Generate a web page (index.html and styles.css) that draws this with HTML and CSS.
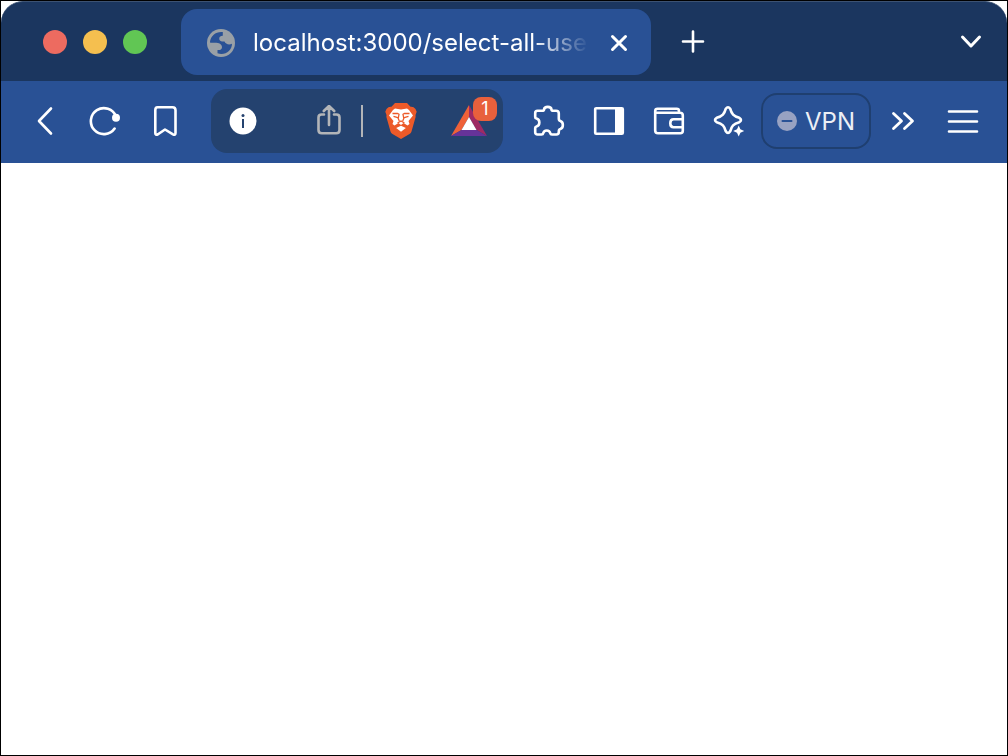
FILE: index.html
```html
<!DOCTYPE html>
<html lang="en">
<head>
<meta charset="utf-8">
<title>localhost:3000/select-all-use</title>
<link rel="stylesheet" href="styles.css">
</head>
<body>
<div class="window">
  <header class="titlebar">
    <div class="lights">
      <button class="light light-close" aria-label="Close window"></button>
      <button class="light light-minimize" aria-label="Minimize window"></button>
      <button class="light light-zoom" aria-label="Zoom window"></button>
    </div>
    <div class="tab">
      <svg class="favicon" viewBox="0 0 28 28" aria-hidden="true">
        <circle cx="14" cy="14" r="14" fill="#99a0a6"/>
        <path d="M15.800 3C9 2.200 3.900 6.600 3 12.500L3.200 13.700H8C12 13.700 15 15 15 18.200C15 20.500 13 21.200 10.500 21V24.300C18 27 25 21.500 25 14.700C22 16.400 18.500 15 17.500 12.600C16 12.600 12.800 12.700 12.300 10.300C11.800 7.800 13.300 7 15.800 6.700Z" fill="#295195"/>
      </svg>
      <span class="tab-title">localhost:3000/select-all-use</span>
      <button class="tab-close" aria-label="Close tab">
        <svg class="icon" viewBox="0 0 32 32"><path d="M9.500 9.500L22.500 22.500M22.500 9.500L9.500 22.500" stroke-width="3"/></svg>
      </button>
    </div>
    <button class="tool" aria-label="New tab">
      <svg class="icon" viewBox="0 0 32 32"><path d="M6 15.500H26M16 5.500V25.500" stroke-width="2.600"/></svg>
    </button>
    <button class="tool tab-search" aria-label="Search tabs">
      <svg class="icon" viewBox="0 0 32 32"><path d="M7.500 11L16 20L24.500 11" stroke-width="3"/></svg>
    </button>
  </header>

  <nav class="toolbar" aria-label="Browser toolbar">
    <button class="tool" aria-label="Back">
      <svg class="icon" viewBox="0 0 32 32"><path d="M22 3.500L10 16L22 28.500"/></svg>
    </button>
    <button class="tool" aria-label="Reload">
      <svg class="icon" viewBox="0 0 32 32"><path d="M27 11.500A13 13 0 1 0 25.600 23.500"/><circle cx="27" cy="12.700" r="4" fill="#fff" stroke="none"/></svg>
    </button>
    <button class="tool" aria-label="Bookmark this page">
      <svg class="icon" viewBox="0 0 32 32"><path d="M8.500 2.200H23.500Q26.500 2.200 26.500 5.200V28Q26.500 30.500 24 29.300L16 24.500L9 29.300Q6.300 30.500 6.300 28V5.200Q6.300 2.200 8.500 2.200Z"/></svg>
    </button>

    <div class="address">
      <button class="site-info" aria-label="Site information">
        <svg class="icon" viewBox="0 0 32 32"><circle cx="16" cy="16" r="13.500" fill="#fff" stroke="none"/><circle cx="16" cy="10.500" r="1.500" fill="#24426f" stroke="none"/><path d="M16 14V23" stroke="#24426f" stroke-width="2" stroke-linecap="butt"/></svg>
      </button>
      <input class="address-input" type="text" aria-label="Address">
      <button class="share" aria-label="Share">
        <svg class="icon share-icon" viewBox="0 0 32 32"><path d="M11 9.500H8.500Q5.500 9.500 5.500 12.500V25Q5.500 28.300 8.800 28.300H23.200Q26.500 28.300 26.500 25V12.500Q26.500 9.500 23.500 9.500H21M16 20V1.500M10.800 6L16 1L21.200 6"/></svg>
      </button>
      <span class="divider"></span>
      <button class="shields" aria-label="Brave Shields">
        <svg class="lion" viewBox="0 0 32 36">
          <path d="M10 0H22L25.500 3.700Q28.500 3.300 30.500 6L31.700 8.700L30.500 12L30.600 14L26.500 28.500Q26 30 24.500 31L16 36L7.500 31Q6 30 5.500 28.500L1.400 14L1.500 12L.3 8.700L1.500 6Q3.500 3.300 6.500 3.700Z" fill="#ec5a29"/>
          <path d="M10 5.500L16 6.500L22 5.500L24 7L28 12.500L23.500 18L24.500 21L22.500 22.500L18.500 20L16 22L13.500 20L9.500 22.500L7.500 21L8.500 18L4 12.500L8 7Z" fill="#fff"/>
          <path d="M16 22.800L20.800 25L16 28.700L11.200 25Z" fill="#fff"/>
          <path d="M7.500 10.500L12.500 10.300L14 11.300L13.200 15.500L14.300 18M24.500 10.500L19.500 10.300L18 11.300L18.800 15.500L17.700 18M8.500 13.300L12.800 14.600M23.500 13.300L19.200 14.600M12.500 20L16 18L19.500 20" fill="none" stroke="#ec5a29" stroke-width="1.300"/>
        </svg>
      </button>
      <button class="rewards" aria-label="Brave Rewards, 1 notification">
        <svg class="triangle" viewBox="0 0 36 32">
          <path d="M18 0L0 31L10.500 25L18 12Z" fill="#ee6138"/>
          <path d="M18 0L36 31L25.500 25L18 12Z" fill="#9e2a63"/>
          <path d="M0 31H36L25.500 25H10.500Z" fill="#663399"/>
          <path d="M18 12L25.500 25H10.500Z" fill="#fff"/>
        </svg>
        <span class="badge">1</span>
      </button>
    </div>

    <button class="tool" aria-label="Extensions">
      <svg class="icon" viewBox="0 0 32 32"><path d="M4.500 5.800H9Q11 5.800 11 4.500C11.500 1 18 1 18.500 4.500Q18.500 5.800 20.500 5.800H23Q25.800 5.800 25.800 8.500V13.500Q25.800 15.700 27.300 16C30.700 17 30.700 23 27.300 24Q25.800 24.300 25.800 26.500V27Q25.800 29.500 23.300 29.500H19Q17.500 29.500 17.300 28.300C16.500 24.500 11 24.500 10.200 28.300Q10 29.500 8.500 29.500H4.500Q2.200 29.500 2.200 27.200V23Q2.200 21.700 3.500 21.400C7.300 20.500 7.300 14.500 3.500 13.600Q2.200 13.300 2.200 12V8.200Q2.200 5.800 4.500 5.800Z"/></svg>
    </button>
    <button class="tool" aria-label="Sidebar">
      <svg class="icon" viewBox="0 0 32 32"><rect x="2.200" y="3.200" width="27.600" height="25.600" rx="1"/><path d="M22 3H30V29H22Z" fill="#fff" stroke="none"/></svg>
    </button>
    <button class="tool" aria-label="Wallet">
      <svg class="icon" viewBox="0 0 32 32"><path d="M26 7.500V6Q26 3.700 23.700 3.700H4.500Q2.200 3.700 2.200 6V25.500Q2.200 28.300 5 28.300H27.300Q29.800 28.300 29.800 25.800V10.500Q29.800 7.800 27 7.800H3M29.500 14.300H20.500Q17.300 14.300 17.300 18.200Q17.300 22.200 20.500 22.200H29.500"/></svg>
    </button>
    <button class="tool" aria-label="Leo AI">
      <svg class="icon" viewBox="0 0 32 32"><path d="M12.800 3.700Q15 .7 17.200 3.700C18.600 9 20.500 11.300 26.300 12.800Q29.700 15 26.300 17.200C20.500 18.700 18.600 21 17.200 26.300Q15 29.700 12.800 26.300C11.400 21 9.500 18.700 3.700 17.200Q.3 15 3.700 12.800C9.500 11.300 11.400 9 12.800 3.700Z"/><path d="M25.700 20.500L27.400 24.300L31.200 26L27.400 27.700L25.700 31.500L24 27.700L20.200 26L24 24.300Z" fill="#fff" stroke="none"/></svg>
    </button>
    <button class="vpn">
      <svg class="vpn-dot" viewBox="0 0 20 20" aria-hidden="true"><circle cx="10" cy="10" r="10" fill="#98a2c2"/><path d="M5.500 10H14.500" stroke="#295195" stroke-width="2" stroke-linecap="round"/></svg>
      VPN
    </button>
    <button class="tool" aria-label="More extensions">
      <svg class="icon" viewBox="0 0 32 32"><path d="M6.500 8.500L14.500 16L6.500 23.500M17.500 8.500L25.500 16L17.500 23.500" stroke-width="2.800"/></svg>
    </button>
    <button class="tool" aria-label="Menu">
      <svg class="icon" viewBox="0 0 32 32"><path d="M2 6.500H30M2 16.500H30M2 26.500H30" stroke-width="2.600"/></svg>
    </button>
  </nav>

  <main class="page"></main>
</div>
</body>
</html>
```

FILE: styles.css
```css
* {
  box-sizing: border-box;
}

body {
  margin: 0;
  background: #fff;
  font-family: Inter, "Liberation Sans", sans-serif;
}

button {
  padding: 0;
  border: 0;
  background: none;
  color: inherit;
  font: inherit;
}

svg {
  display: block;
  flex: none;
}

.window {
  display: flex;
  flex-direction: column;
  min-height: 100vh;
  border: 1px solid #000;
  color: #fff;
}

.titlebar {
  display: flex;
  align-items: center;
  height: 80px;
  padding: 0 6px 0 42px;
  border-top: 1px solid #3c5272;
  border-radius: 22px 22px 0 0;
  background: #1b365f;
}

.lights {
  display: flex;
  gap: 16px;
  margin-right: 34px;
}

.light {
  width: 24px;
  height: 24px;
  border-radius: 50%;
}

.light-close {
  background: #ed6b60;
}

.light-minimize {
  background: #f5bf4f;
}

.light-zoom {
  background: #61c654;
}

.tab {
  display: flex;
  flex: 0 1 470px;
  align-items: center;
  min-width: 0;
  height: 66px;
  padding: 2px 16px 0 26px;
  border-radius: 16px;
  background: #295195;
}

.favicon {
  width: 28px;
  height: 28px;
}

.tab-title {
  flex: 1;
  min-width: 0;
  margin: 0 14px 0 18px;
  overflow: hidden;
  font-size: 24px;
  line-height: 32px;
  white-space: nowrap;
  mask-image: linear-gradient(to right, #000 calc(100% - 56px), transparent);
}

.icon {
  width: 32px;
  height: 32px;
  fill: none;
  stroke: #fff;
  stroke-width: 2.6;
  stroke-linecap: round;
  stroke-linejoin: round;
}

.tool {
  display: flex;
  flex: none;
  align-items: center;
  justify-content: center;
  width: 60px;
  height: 60px;
}

.titlebar .tool {
  margin-left: 12px;
}

.titlebar .tab-search {
  margin-left: auto;
}

.toolbar {
  display: flex;
  align-items: center;
  padding: 8px 14px 10px;
  background: #295195;
}

.address {
  display: flex;
  flex: 1;
  align-items: center;
  min-width: 0;
  height: 64px;
  margin: 0 16px;
  padding: 0 16px;
  border-radius: 16px;
  background: #24426f;
}

.address-input {
  flex: 1;
  width: 0;
  min-width: 0;
  padding: 0 8px;
  border: 0;
  outline: 0;
  background: none;
  color: #fff;
  font: inherit;
  font-size: 24px;
}

.share-icon {
  stroke: #b3b5b8;
}

.divider {
  width: 2px;
  height: 32px;
  margin: 0 22px 0 16px;
  background: #b3b5b8;
}

.lion {
  width: 32px;
  height: 36px;
}

.rewards {
  position: relative;
  margin-left: 34px;
}

.triangle {
  width: 36px;
  height: 32px;
}

.badge {
  position: absolute;
  top: -8px;
  right: -10px;
  width: 24px;
  height: 24px;
  border-radius: 8px;
  background: #e8603c;
  font-size: 18px;
  line-height: 24px;
  text-align: center;
}

.vpn {
  display: flex;
  flex: none;
  align-items: center;
  gap: 8px;
  height: 56px;
  margin: 0 2px;
  padding: 0 14px;
  border: 2px solid #1f3f70;
  border-radius: 16px;
  color: #eceff5;
  font-size: 24px;
}

.vpn-dot {
  width: 20px;
  height: 20px;
}

.page {
  flex: 1;
  background: #fff;
}
```
